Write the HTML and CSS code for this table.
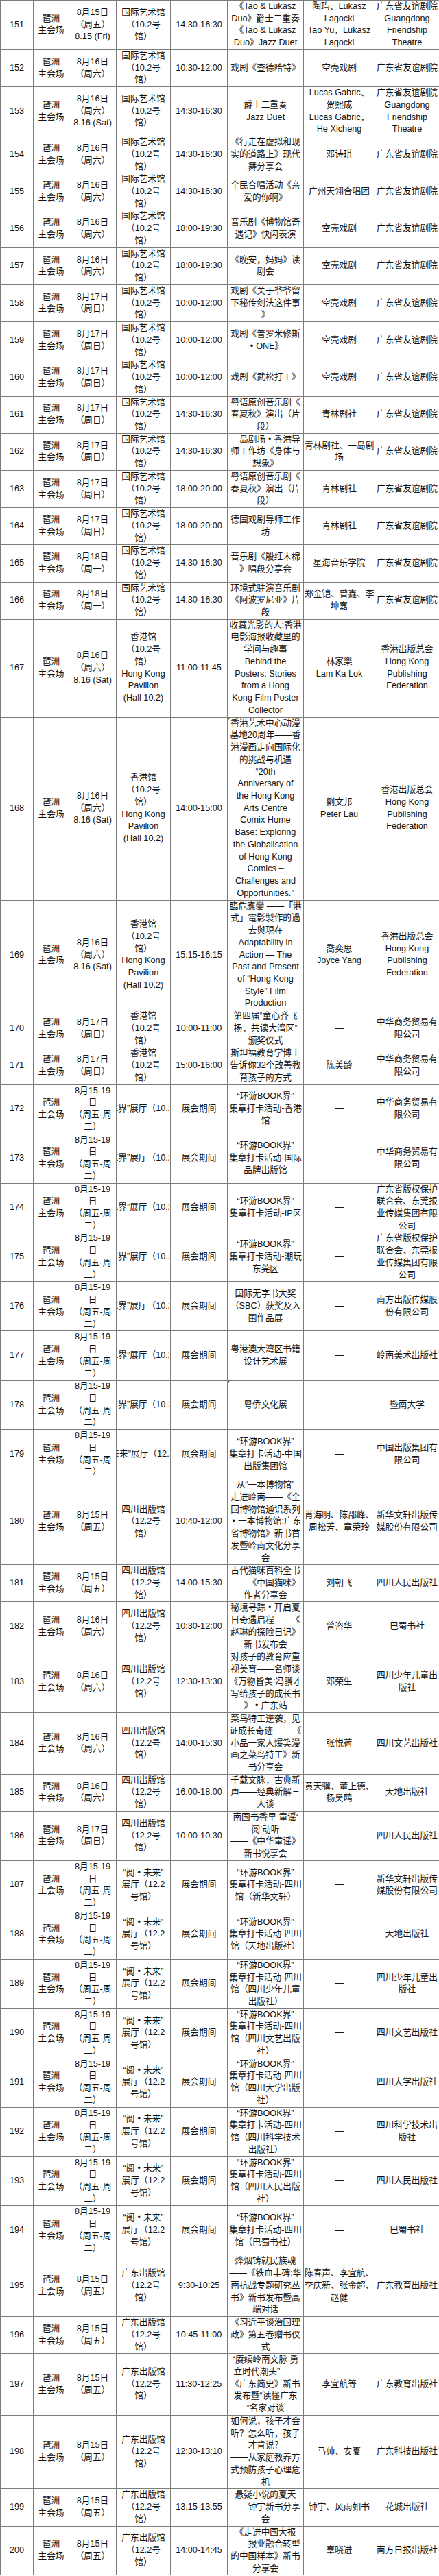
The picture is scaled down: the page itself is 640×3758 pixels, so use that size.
FILE: index.html
```html
<!DOCTYPE html>
<html lang="zh-CN">
<head>
<meta charset="utf-8">
<title>活动日程</title>
<link rel="stylesheet" href="styles.css">
</head>
<body>
<table class="sched">
<colgroup>
<col class="c-no"><col class="c-site"><col class="c-date"><col class="c-venue"><col class="c-time"><col class="c-event"><col class="c-guest"><col class="c-org">
</colgroup>
<tbody>
<tr><td>151</td><td>琶洲<br>主会场</td><td>8月15日<br>（周五）<br>8.15 (Fri)</td><td>国际艺术馆<br>（10.2号<br>馆）</td><td>14:30-16:30</td><td>《Tao &amp; Lukasz<br>Duo》爵士二重奏<br>《Tao &amp; Lukasz<br>Duo》Jazz Duet</td><td>陶玙、Lukasz<br>Lagocki<br>Tao Yu，Lukasz<br>Lagocki</td><td>广东省友谊剧院<br>Guangdong<br>Friendship<br>Theatre</td></tr>
<tr><td>152</td><td>琶洲<br>主会场</td><td>8月16日<br>（周六）</td><td>国际艺术馆<br>（10.2号<br>馆）</td><td>10:30-12:00</td><td>戏剧《查德哈特》</td><td>空壳戏剧</td><td>广东省友谊剧院</td></tr>
<tr><td>153</td><td>琶洲<br>主会场</td><td>8月16日<br>（周六）<br>8.16 (Sat)</td><td>国际艺术馆<br>（10.2号<br>馆）</td><td>14:30-16:30</td><td>爵士二重奏<br>Jazz Duet</td><td>Lucas Gabric、<br>贺熙成<br>Lucas Gabric，<br>He Xicheng</td><td>广东省友谊剧院<br>Guangdong<br>Friendship<br>Theatre</td></tr>
<tr><td>154</td><td>琶洲<br>主会场</td><td>8月16日<br>（周六）</td><td>国际艺术馆<br>（10.2号<br>馆）</td><td>14:30-16:30</td><td>《行走在虚拟和现<br>实的道路上》现代<br>舞分享会</td><td>邓诗琪</td><td>广东省友谊剧院</td></tr>
<tr><td>155</td><td>琶洲<br>主会场</td><td>8月16日<br>（周六）</td><td>国际艺术馆<br>（10.2号<br>馆）</td><td>14:30-16:30</td><td>全民合唱活动《亲<br>爱的你啊》</td><td>广州天翎合唱团</td><td>广东省友谊剧院</td></tr>
<tr><td>156</td><td>琶洲<br>主会场</td><td>8月16日<br>（周六）</td><td>国际艺术馆<br>（10.2号<br>馆）</td><td>18:00-19:30</td><td>音乐剧《博物馆奇<br>遇记》快闪表演</td><td>空壳戏剧</td><td>广东省友谊剧院</td></tr>
<tr><td>157</td><td>琶洲<br>主会场</td><td>8月16日<br>（周六）</td><td>国际艺术馆<br>（10.2号<br>馆）</td><td>18:00-19:30</td><td>《晚安，妈妈》读<br>剧会</td><td>空壳戏剧</td><td>广东省友谊剧院</td></tr>
<tr><td>158</td><td>琶洲<br>主会场</td><td>8月17日<br>（周日）</td><td>国际艺术馆<br>（10.2号<br>馆）</td><td>10:00-12:00</td><td>戏剧《关于爷爷留<br>下秘传剑法这件事<br>》</td><td>空壳戏剧</td><td>广东省友谊剧院</td></tr>
<tr><td>159</td><td>琶洲<br>主会场</td><td>8月17日<br>（周日）</td><td>国际艺术馆<br>（10.2号<br>馆）</td><td>10:00-12:00</td><td>戏剧《普罗米修斯<br><span class="dot">•</span>ONE》</td><td>空壳戏剧</td><td>广东省友谊剧院</td></tr>
<tr><td>160</td><td>琶洲<br>主会场</td><td>8月17日<br>（周日）</td><td>国际艺术馆<br>（10.2号<br>馆）</td><td>10:00-12:00</td><td>戏剧《武松打工》</td><td>空壳戏剧</td><td>广东省友谊剧院</td></tr>
<tr><td>161</td><td>琶洲<br>主会场</td><td>8月17日<br>（周日）</td><td>国际艺术馆<br>（10.2号<br>馆）</td><td>14:30-16:30</td><td>粤语原创音乐剧《<br>春夏秋》演出（片<br>段）</td><td>青林剧社</td><td>广东省友谊剧院</td></tr>
<tr><td>162</td><td>琶洲<br>主会场</td><td>8月17日<br>（周日）</td><td>国际艺术馆<br>（10.2号<br>馆）</td><td>14:30-16:30</td><td>一岛剧场<span class="dot">•</span>香港导<br>师工作坊《身体与<br>想象》</td><td>青林剧社、一岛剧<br>场</td><td>广东省友谊剧院</td></tr>
<tr><td>163</td><td>琶洲<br>主会场</td><td>8月17日<br>（周日）</td><td>国际艺术馆<br>（10.2号<br>馆）</td><td>18:00-20:00</td><td>粤语原创音乐剧《<br>春夏秋》演出（片<br>段）</td><td>青林剧社</td><td>广东省友谊剧院</td></tr>
<tr><td>164</td><td>琶洲<br>主会场</td><td>8月17日<br>（周日）</td><td>国际艺术馆<br>（10.2号<br>馆）</td><td>18:00-20:00</td><td>德国戏剧导师工作<br>坊</td><td>青林剧社</td><td>广东省友谊剧院</td></tr>
<tr><td>165</td><td>琶洲<br>主会场</td><td>8月18日<br>（周一）</td><td>国际艺术馆<br>（10.2号<br>馆）</td><td>14:30-16:30</td><td>音乐剧《殷红木棉<br>》唱段分享会</td><td>星海音乐学院</td><td>广东省友谊剧院</td></tr>
<tr><td>166</td><td>琶洲<br>主会场</td><td>8月18日<br>（周一）</td><td>国际艺术馆<br>（10.2号<br>馆）</td><td>14:30-16:30</td><td>环境式驻演音乐剧<br>《阿波罗尼亚》片<br>段</td><td>郑金铠、曾鑫、李<br>坤嘉</td><td>广东省友谊剧院</td></tr>
<tr><td>167</td><td>琶洲<br>主会场</td><td>8月16日<br>（周六）<br>8.16 (Sat)</td><td>香港馆<br>（10.2号<br>馆）<br>Hong Kong<br>Pavilion<br>(Hall 10.2)</td><td>11:00-11:45</td><td>收藏光影的人:香港<br>电影海报收藏里的<br>学问与趣事<br>Behind the<br>Posters: Stories<br>from a Hong<br>Kong Film Poster<br>Collector</td><td>林家樂<br>Lam Ka Lok</td><td>香港出版总会<br>Hong Kong<br>Publishing<br>Federation</td></tr>
<tr><td>168</td><td>琶洲<br>主会场</td><td>8月16日<br>（周六）<br>8.16 (Sat)</td><td>香港馆<br>（10.2号<br>馆）<br>Hong Kong<br>Pavilion<br>(Hall 10.2)</td><td>14:00-15:00</td><td class="flag">香港艺术中心动漫<br>基地20周年——香<br>港漫画走向国际化<br>的挑战与机遇<br>“20th<br>Anniversary of<br>the Hong Kong<br>Arts Centre<br>Comix Home<br>Base: Exploring<br>the Globalisation<br>of Hong Kong<br>Comics –<br>Challenges and<br>Opportunities.”</td><td>劉文邦<br>Peter Lau</td><td>香港出版总会<br>Hong Kong<br>Publishing<br>Federation</td></tr>
<tr><td>169</td><td>琶洲<br>主会场</td><td>8月16日<br>（周六）<br>8.16 (Sat)</td><td>香港馆<br>（10.2号<br>馆）<br>Hong Kong<br>Pavilion<br>(Hall 10.2)</td><td>15:15-16:15</td><td>臨危應變 ——「港<br>式」電影製作的過<br>去與現在<br>Adaptability in<br>Action — The<br>Past and Present<br>of “Hong Kong<br>Style” Film<br>Production</td><td>喬奕思<br>Joyce Yang</td><td>香港出版总会<br>Hong Kong<br>Publishing<br>Federation</td></tr>
<tr><td>170</td><td>琶洲<br>主会场</td><td>8月17日<br>（周日）</td><td>香港馆<br>（10.2号<br>馆）</td><td>10:00-11:00</td><td>第四届“童心齐飞<br>扬，共读大湾区”<br>颁奖仪式</td><td>—</td><td>中华商务贸易有<br>限公司</td></tr>
<tr><td>171</td><td>琶洲<br>主会场</td><td>8月17日<br>（周日）</td><td>香港馆<br>（10.2号<br>馆）</td><td>15:00-16:00</td><td>斯坦福教育学博士<br>告诉你32个改善教<br>育孩子的方式</td><td>陈美龄</td><td>中华商务贸易有<br>限公司</td></tr>
<tr><td>172</td><td>琶洲<br>主会场</td><td>8月15-19<br>日<br>（周五-周<br>二）</td><td><div class="clip">“环游BOOK界”展厅（10.2号馆）</div></td><td>展会期间</td><td>“环游BOOK界”<br>集章打卡活动-香港<br>馆</td><td>—</td><td>中华商务贸易有<br>限公司</td></tr>
<tr><td>173</td><td>琶洲<br>主会场</td><td>8月15-19<br>日<br>（周五-周<br>二）</td><td><div class="clip">“环游BOOK界”展厅（10.2号馆）</div></td><td>展会期间</td><td>“环游BOOK界”<br>集章打卡活动-国际<br>品牌出版馆</td><td>—</td><td>中华商务贸易有<br>限公司</td></tr>
<tr><td>174</td><td>琶洲<br>主会场</td><td>8月15-19<br>日<br>（周五-周<br>二）</td><td><div class="clip">“环游BOOK界”展厅（10.2号馆）</div></td><td>展会期间</td><td>“环游BOOK界”<br>集章打卡活动-IP区</td><td>—</td><td>广东省版权保护<br>联合会、东莞报<br>业传媒集团有限<br>公司</td></tr>
<tr><td>175</td><td>琶洲<br>主会场</td><td>8月15-19<br>日<br>（周五-周<br>二）</td><td><div class="clip">“环游BOOK界”展厅（10.2号馆）</div></td><td>展会期间</td><td>“环游BOOK界”<br>集章打卡活动-潮玩<br>东莞区</td><td>—</td><td>广东省版权保护<br>联合会、东莞报<br>业传媒集团有限<br>公司</td></tr>
<tr><td>176</td><td>琶洲<br>主会场</td><td>8月15-19<br>日<br>（周五-周<br>二）</td><td><div class="clip">“环游BOOK界”展厅（10.2号馆）</div></td><td>展会期间</td><td>国际无字书大奖<br>（SBC）获奖及入<br>围作品展</td><td>—</td><td>南方出版传媒股<br>份有限公司</td></tr>
<tr><td>177</td><td>琶洲<br>主会场</td><td>8月15-19<br>日<br>（周五-周<br>二）</td><td><div class="clip">“环游BOOK界”展厅（10.2号馆）</div></td><td>展会期间</td><td>粤港澳大湾区书籍<br>设计艺术展</td><td>—</td><td>岭南美术出版社</td></tr>
<tr><td>178</td><td>琶洲<br>主会场</td><td>8月15-19<br>日<br>（周五-周<br>二）</td><td><div class="clip">“环游BOOK界”展厅（10.2号馆）</div></td><td>展会期间</td><td class="flag">粤侨文化展</td><td>—</td><td>暨南大学</td></tr>
<tr><td>179</td><td>琶洲<br>主会场</td><td>8月15-19<br>日<br>（周五-周<br>二）</td><td><div class="clip clip-read">“阅<span class="dot">•</span>未来”展厅（12.2号馆）</div></td><td>展会期间</td><td>“环游BOOK界”<br>集章打卡活动-中国<br>出版集团馆</td><td>—</td><td>中国出版集团有<br>限公司</td></tr>
<tr><td>180</td><td>琶洲<br>主会场</td><td>8月15日<br>（周五）</td><td>四川出版馆<br>（12.2号<br>馆）</td><td>10:40-12:00</td><td>从“一本博物馆”<br>走进岭南——《全<br>国博物馆通识系列<br><span class="dot">•</span>一本博物馆:广东<br>省博物馆》新书首<br>发暨岭南文化分享<br>会</td><td>肖海明、陈邵峰、<br>周松芳、章荣玲</td><td>新华文轩出版传<br>媒股份有限公司</td></tr>
<tr><td>181</td><td>琶洲<br>主会场</td><td>8月15日<br>（周五）</td><td>四川出版馆<br>（12.2号<br>馆）</td><td>14:00-15:30</td><td>古代猫咪百科全书<br>——《中国猫咪》<br>作者分享会</td><td>刘朝飞</td><td>四川人民出版社</td></tr>
<tr><td>182</td><td>琶洲<br>主会场</td><td>8月16日<br>（周六）</td><td>四川出版馆<br>（12.2号<br>馆）</td><td>10:30-12:00</td><td>秘境寻踪<span class="dot">•</span>开启夏<br>日奇遇启程——《<br>赵琳的探险日记》<br>新书发布会</td><td>曾咨华</td><td>巴蜀书社</td></tr>
<tr><td>183</td><td>琶洲<br>主会场</td><td>8月16日<br>（周六）</td><td>四川出版馆<br>（12.2号<br>馆）</td><td>12:30-13:30</td><td>对孩子的教育应重<br>视美育——名师谈<br>《万物皆美:冯骥才<br>写给孩子的成长书<br>》<span class="dot">•</span>广东站</td><td>邓荣生</td><td>四川少年儿童出<br>版社</td></tr>
<tr><td>184</td><td>琶洲<br>主会场</td><td>8月16日<br>（周六）</td><td>四川出版馆<br>（12.2号<br>馆）</td><td>14:00-15:30</td><td>菜鸟特工逆袭，见<br>证成长奇迹 ——《<br>小品一家人爆笑漫<br>画之菜鸟特工》新<br>书分享会</td><td>张悦荷</td><td>四川文艺出版社</td></tr>
<tr><td>185</td><td>琶洲<br>主会场</td><td>8月16日<br>（周六）</td><td>四川出版馆<br>（12.2号<br>馆）</td><td>16:00-18:00</td><td>千载文脉，古典新<br>声——经典新解三<br>人谈</td><td>黄天骥、董上德、<br>杨昊鸥</td><td>天地出版社</td></tr>
<tr><td>186</td><td>琶洲<br>主会场</td><td>8月17日<br>（周日）</td><td>四川出版馆<br>（12.2号<br>馆）</td><td>10:00-10:30</td><td>南国书香里 童谣‘<br>阅’动听<br>——《中华童谣》<br>新书悦享会</td><td>—</td><td>四川人民出版社</td></tr>
<tr><td>187</td><td>琶洲<br>主会场</td><td>8月15-19<br>日<br>（周五-周<br>二）</td><td>“阅<span class="dot">•</span>未来”<br>展厅（12.2<br>号馆）</td><td>展会期间</td><td>“环游BOOK界”<br>集章打卡活动-四川<br>馆（新华文轩）</td><td>—</td><td>新华文轩出版传<br>媒股份有限公司</td></tr>
<tr><td>188</td><td>琶洲<br>主会场</td><td>8月15-19<br>日<br>（周五-周<br>二）</td><td>“阅<span class="dot">•</span>未来”<br>展厅（12.2<br>号馆）</td><td>展会期间</td><td>“环游BOOK界”<br>集章打卡活动-四川<br>馆（天地出版社）</td><td>—</td><td>天地出版社</td></tr>
<tr><td>189</td><td>琶洲<br>主会场</td><td>8月15-19<br>日<br>（周五-周<br>二）</td><td>“阅<span class="dot">•</span>未来”<br>展厅（12.2<br>号馆）</td><td>展会期间</td><td>“环游BOOK界”<br>集章打卡活动-四川<br>馆（四川少年儿童<br>出版社）</td><td>—</td><td>四川少年儿童出<br>版社</td></tr>
<tr><td>190</td><td>琶洲<br>主会场</td><td>8月15-19<br>日<br>（周五-周<br>二）</td><td>“阅<span class="dot">•</span>未来”<br>展厅（12.2<br>号馆）</td><td>展会期间</td><td>“环游BOOK界”<br>集章打卡活动-四川<br>馆（四川文艺出版<br>社）</td><td>—</td><td>四川文艺出版社</td></tr>
<tr><td>191</td><td>琶洲<br>主会场</td><td>8月15-19<br>日<br>（周五-周<br>二）</td><td>“阅<span class="dot">•</span>未来”<br>展厅（12.2<br>号馆）</td><td>展会期间</td><td>“环游BOOK界”<br>集章打卡活动-四川<br>馆（四川大学出版<br>社）</td><td>—</td><td>四川大学出版社</td></tr>
<tr><td>192</td><td>琶洲<br>主会场</td><td>8月15-19<br>日<br>（周五-周<br>二）</td><td>“阅<span class="dot">•</span>未来”<br>展厅（12.2<br>号馆）</td><td>展会期间</td><td>“环游BOOK界”<br>集章打卡活动-四川<br>馆（四川科学技术<br>出版社）</td><td>—</td><td>四川科学技术出<br>版社</td></tr>
<tr><td>193</td><td>琶洲<br>主会场</td><td>8月15-19<br>日<br>（周五-周<br>二）</td><td>“阅<span class="dot">•</span>未来”<br>展厅（12.2<br>号馆）</td><td>展会期间</td><td>“环游BOOK界”<br>集章打卡活动-四川<br>馆（四川人民出版<br>社）</td><td>—</td><td>四川人民出版社</td></tr>
<tr><td>194</td><td>琶洲<br>主会场</td><td>8月15-19<br>日<br>（周五-周<br>二）</td><td>“阅<span class="dot">•</span>未来”<br>展厅（12.2<br>号馆）</td><td>展会期间</td><td>“环游BOOK界”<br>集章打卡活动-四川<br>馆（巴蜀书社）</td><td>—</td><td>巴蜀书社</td></tr>
<tr><td>195</td><td>琶洲<br>主会场</td><td>8月15日<br>（周五）</td><td>广东出版馆<br>（12.2号<br>馆）</td><td>9:30-10:25</td><td>烽烟铸就民族魂<br>——《铁血丰碑:华<br>南抗战专题研究丛<br>书》新书发布暨高<br>端对话</td><td>陈春声、李宜航、<br>李庆新、张金超、<br>赵健</td><td>广东教育出版社</td></tr>
<tr><td>196</td><td>琶洲<br>主会场</td><td>8月15日<br>（周五）</td><td>广东出版馆<br>（12.2号<br>馆）</td><td>10:45-11:00</td><td>《习近平谈治国理<br>政》第五卷赠书仪<br>式</td><td>—</td><td>—</td></tr>
<tr><td>197</td><td>琶洲<br>主会场</td><td>8月15日<br>（周五）</td><td>广东出版馆<br>（12.2号<br>馆）</td><td>11:30-12:25</td><td>“赓续岭南文脉 勇<br>立时代潮头”——<br>《广东简史》新书<br>发布暨“读懂广东<br>”名家对谈</td><td>李宜航等</td><td>广东教育出版社</td></tr>
<tr><td>198</td><td>琶洲<br>主会场</td><td>8月15日<br>（周五）</td><td>广东出版馆<br>（12.2号<br>馆）</td><td>12:30-13:10</td><td>如何说，孩子才会<br>听？怎么听，孩子<br>才肯说？<br>——从家庭教养方<br>式预防孩子心理危<br>机</td><td>马帅、安夏</td><td>广东科技出版社</td></tr>
<tr><td>199</td><td>琶洲<br>主会场</td><td>8月15日<br>（周五）</td><td>广东出版馆<br>（12.2号<br>馆）</td><td>13:15-13:55</td><td>悬疑小说的夏天<br>——钟宇新书分享<br>会</td><td>钟宇、风雨如书</td><td>花城出版社</td></tr>
<tr><td>200</td><td>琶洲<br>主会场</td><td>8月15日<br>（周五）</td><td>广东出版馆<br>（12.2号<br>馆）</td><td>14:00-14:45</td><td>《走进中国大报<br>——报业融合转型<br>的中国样本》新书<br>分享会</td><td>辜晓进</td><td>南方日报出版社</td></tr>
</tbody>
</table>
</body>
</html>
```
FILE: styles.css
```css
html, body {
  margin: 0;
  padding: 0;
  background: #ffffff;
}

.sched {
  border-collapse: collapse;
  table-layout: fixed;
  width: 640px;
  font-family: "Liberation Sans", "Noto Sans CJK SC", sans-serif;
  font-size: 12.7px;
  line-height: 17.73px;
  color: #111111;
}

.c-no { width: 48px; }
.c-site { width: 52px; }
.c-date { width: 69px; }
.c-venue { width: 79px; }
.c-time { width: 83px; }
.c-event { width: 111px; }
.c-guest { width: 104px; }
.c-org { width: 94px; }

.sched td {
  border: 1px solid #7c7c7c;
  padding: 0 1px;
  text-align: center;
  vertical-align: middle;
  white-space: nowrap;
  overflow: hidden;
}

.dot {
  margin: 0 4px;
}

.clip {
  overflow: hidden;
  white-space: nowrap;
  text-align: left;
  text-indent: -65px;
}

.clip-read {
  text-indent: -39px;
}

.sched td.flag {
  position: relative;
}

.sched td.flag::before {
  content: "";
  position: absolute;
  left: 0;
  top: 0;
  border-top: 4px solid #2e8b2e;
  border-right: 4px solid transparent;
}
```
